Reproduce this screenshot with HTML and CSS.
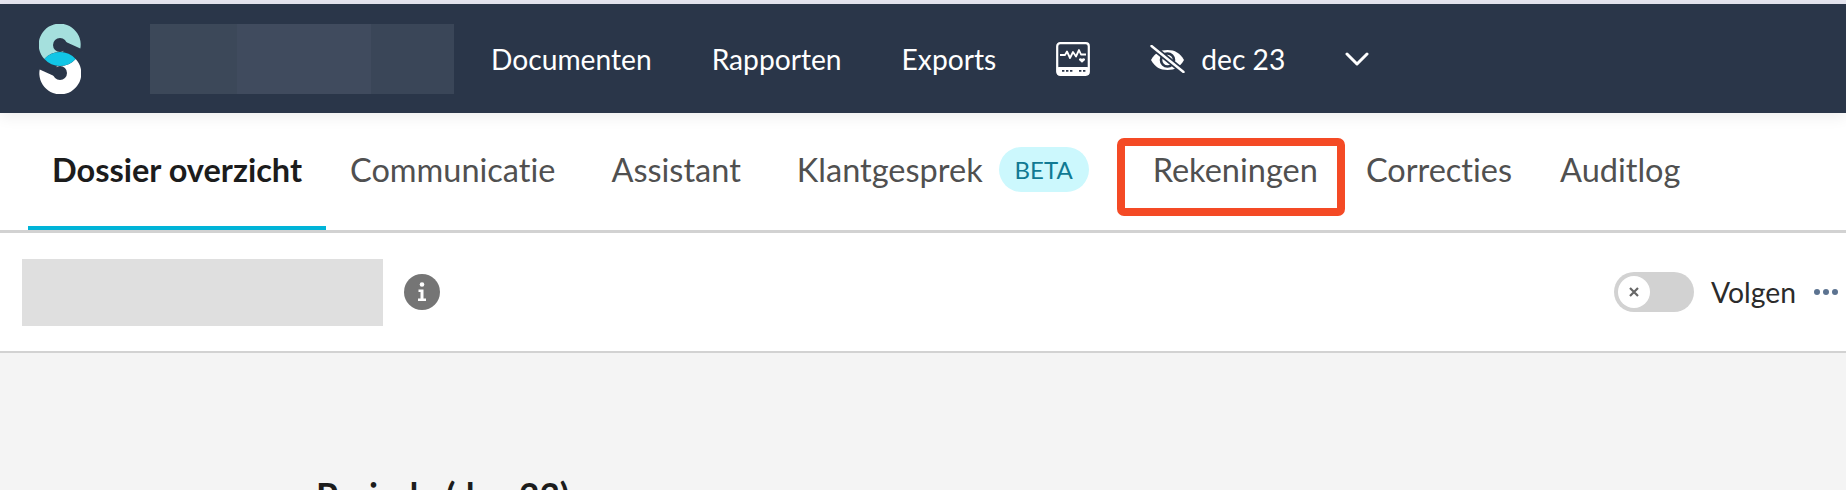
FILE: index.html
```html
<!DOCTYPE html>
<html lang="nl">
<head>
<meta charset="utf-8">
<title>Dossier overzicht</title>
<link rel="stylesheet" href="styles.css">
</head>
<body>
<div class="top-strip"></div>
<header class="nav">
  <svg class="logo" viewBox="0 0 42 70" width="42" height="70" aria-label="Logo">
    <path class="logo-teal" d="M41.3 24.6A21 21 0 1 0 5.35 35A21 21 0 0 1 24 28.2L27 18Z"/>
    <path class="logo-white" transform="rotate(180 21 35)" d="M41.3 24.6A21 21 0 1 0 5.35 35A21 21 0 0 1 24 28.2L27 18Z"/>
    <path class="logo-cyan" d="M5.35 35A21 21 0 0 1 36.65 35A21 21 0 0 1 5.35 35Z"/>
    <circle class="logo-hole" cx="21" cy="21" r="7"/>
    <circle class="logo-hole" cx="21" cy="49" r="7"/>
  </svg>
  <div class="nav-redacted">
    <span class="nav-red-a"></span><span class="nav-red-b"></span><span class="nav-red-c"></span>
  </div>
  <nav class="nav-links">
    <a class="nav-link">Documenten</a>
    <a class="nav-link">Rapporten</a>
    <a class="nav-link">Exports</a>
    <svg class="icon-monitor" viewBox="0 0 34 34" width="34" height="34">
      <rect x="1.2" y="1.2" width="31.6" height="31.6" rx="3" fill="none" stroke="#fff" stroke-width="2.2"/>
      <rect x="1.2" y="25" width="31.6" height="7.8" rx="1.5" fill="#fff"/>
      <path d="M4 13H9L11 9.5L14 16L17 10L20 14.5L23 8L25 12.5H30" fill="none" stroke="#fff" stroke-width="1.8" stroke-linejoin="round"/>
      <path d="M26 20.8L23.2 18.3C22.2 17 23.9 15.3 26 16.8C28.1 15.3 29.8 17 28.8 18.3Z" fill="#fff"/>
      <path d="M6 28.8H8.4M10 28.8H12.4M14 28.8H16.4M23 28.8H25.4M27 28.8H29.4" stroke="#2a3649" stroke-width="1.8"/>
    </svg>
    <div class="period">
      <svg class="icon-eye" viewBox="0 0 35 28" width="35" height="28">
        <path d="M1 15C5 8 10 5 17.500 5C25 5 30 8 34 15C30 22 25 25 17.500 25C10 25 5 22 1 15Z" fill="#fff"/>
        <circle cx="17.500" cy="15" r="6.500" fill="none" stroke="#2a3649" stroke-width="2.600"/>
        <path d="M2 1.500L33 26.500" stroke="#2a3649" stroke-width="6"/>
        <path d="M1.500 1L33.500 27" stroke="#fff" stroke-width="2.400" stroke-linecap="round"/>
      </svg>
      <span class="nav-link">dec 23</span>
    </div>
    <svg class="icon-chevron" viewBox="0 0 24 14" width="24" height="14">
      <path d="M2 2L12 12L22 2" fill="none" stroke="#fff" stroke-width="3" stroke-linecap="round" stroke-linejoin="round"/>
    </svg>
  </nav>
</header>
<div class="tabs">
  <a class="tab tab-active">Dossier overzicht</a>
  <a class="tab">Communicatie</a>
  <a class="tab tab-spaced">Assistant</a>
  <a class="tab tab-spaced">Klantgesprek<span class="beta">BETA</span></a>
  <a class="tab tab-highlighted">Rekeningen<span class="highlight"></span></a>
  <a class="tab">Correcties</a>
  <a class="tab">Auditlog</a>
</div>
<div class="subheader">
  <div class="sub-left">
    <div class="sub-redacted"></div>
    <svg class="icon-info" viewBox="0 0 36 36" width="36" height="36">
      <circle cx="18" cy="18" r="18" fill="#757575"/>
      <circle cx="18" cy="10.500" r="2.300" fill="#fff"/>
      <path d="M14.500 15.500H19.500V24.500H22V27H14V24.500H16.500V18H14.500Z" fill="#fff"/>
    </svg>
  </div>
  <div class="sub-right">
    <div class="toggle">
      <span class="knob">
        <svg viewBox="0 0 12 12" width="12" height="12"><path d="M2 2L10 10M10 2L2 10" stroke="#666" stroke-width="2.200"/></svg>
      </span>
    </div>
    <span class="follow">Volgen</span>
    <div class="dots"><i></i><i></i><i></i></div>
  </div>
</div>
<main class="content">
  <h2 class="heading">Periode (dec 23)</h2>
</main>
</body>
</html>
```
FILE: styles.css
```css
* { box-sizing: border-box; }
html, body { margin: 0; height: 490px; overflow: hidden; }
body {
  background: #f4f4f4;
  font-family: Lato, "Liberation Sans", sans-serif;
  font-variant-ligatures: none;
  color: #1c1c1c;
}

.top-strip { height: 4px; background: #e6e6f0; }

.nav {
  position: relative;
  z-index: 2;
  display: flex;
  align-items: center;
  height: 109px;
  padding-left: 39px;
  background: #2a3649;
  box-shadow: 0 4px 14px rgba(0, 0, 0, .07);
}
.logo { flex: none; }
.logo-teal { fill: #a5e0dd; }
.logo-white { fill: #fff; }
.logo-cyan { fill: #12c6e6; }
.logo-hole { fill: #2a3649; }

.nav-redacted { display: flex; width: 304px; height: 70px; margin-left: 69px; }
.nav-red-a { width: 87px; background: #3c4859; }
.nav-red-b { width: 134px; background: #404b5e; }
.nav-red-c { width: 83px; background: #3a4658; }

.nav-links { display: flex; align-items: center; margin-left: 37px; }
.nav-link { color: #fff; font-size: 28.2px; margin-right: 60px; white-space: nowrap; }
.icon-monitor { margin-right: 60px; }
.period { display: flex; align-items: center; gap: 16px; }
.period .nav-link { margin-right: 60px; }
.icon-chevron { display: block; }

.tabs {
  display: flex;
  height: 120px;
  padding-left: 28px;
  background: #fff;
  border-bottom: 3px solid #d2d2d2;
}
.tab {
  position: relative;
  display: flex;
  align-items: center;
  height: 117px;
  padding: 0 24px 4px;
  font-size: 32.5px;
  color: #505050;
  white-space: nowrap;
}
.tab-active { font-weight: 700; color: #1c1c1c; border-bottom: 4px solid #00b4d8; padding-bottom: 0; }
.tab-spaced { margin-left: 8px; }
.tab-highlighted { margin-left: 16px; }
.beta {
  display: flex;
  align-items: center;
  justify-content: center;
  width: 90px;
  height: 45px;
  margin-left: 16px;
  border-radius: 23px;
  background: #ccf8fd;
  color: #107a93;
  font-size: 24px;
}
.highlight {
  position: absolute;
  top: 25px;
  left: -12px;
  width: 228px;
  height: 78px;
  border: 8px solid #f44a25;
  border-radius: 7px;
}

.subheader {
  display: flex;
  align-items: center;
  justify-content: space-between;
  height: 120px;
  padding: 0 8px 0 22px;
  background: #fff;
  border-bottom: 2px solid #d2d2d2;
}
.sub-left { display: flex; align-items: center; gap: 21px; }
.sub-redacted { width: 361px; height: 67px; background: #dfdfdf; }
.sub-right { display: flex; align-items: center; }
.toggle {
  display: flex;
  align-items: center;
  width: 80px;
  height: 40px;
  padding: 4px;
  border-radius: 20px;
  background: #d2d2d2;
}
.knob {
  display: flex;
  align-items: center;
  justify-content: center;
  width: 32px;
  height: 32px;
  border-radius: 50%;
  background: #fff;
}
.follow { margin-left: 17px; font-size: 28.3px; color: #2b2b2b; }
.dots { display: flex; gap: 3px; margin-left: 18px; }
.dots i { width: 6px; height: 6px; border-radius: 50%; background: #5c7390; }

.content { padding: 122px 0 0 316px; }
.heading { margin: 0; font-size: 35.3px; font-weight: 700; line-height: 42px; color: #1c1c1c; }
```
